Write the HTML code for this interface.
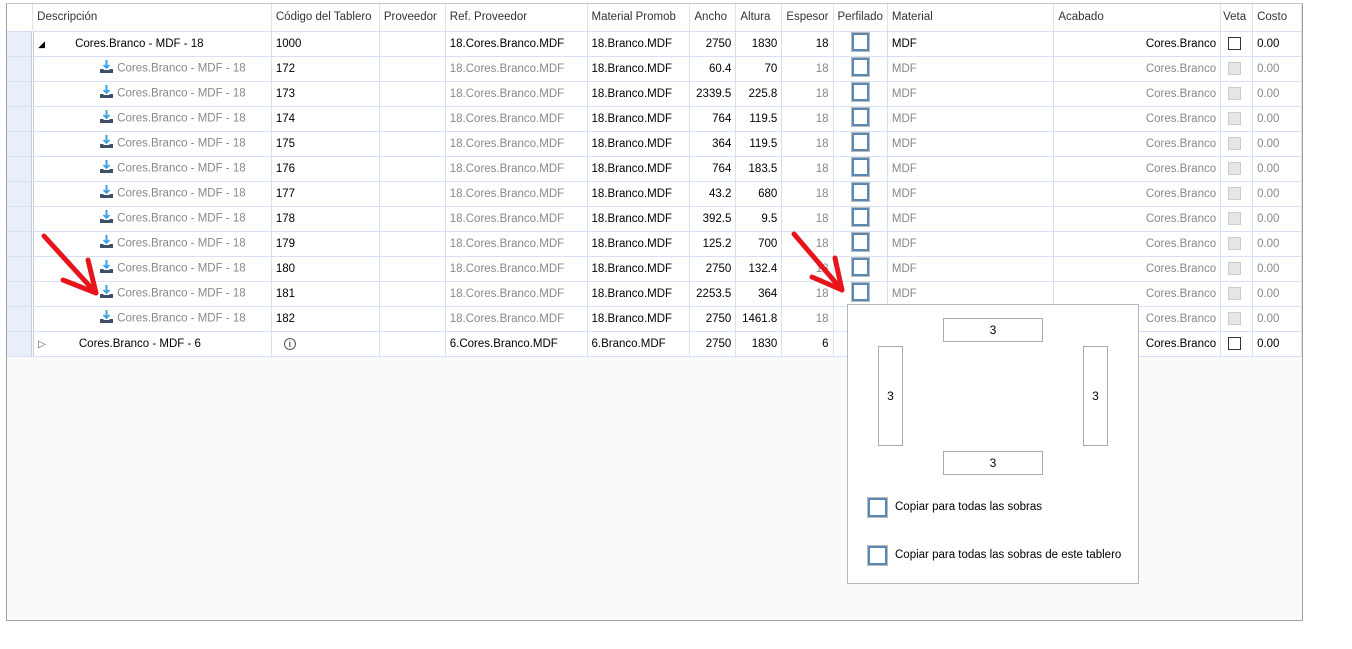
<!DOCTYPE html>
<html><head><meta charset="utf-8"><style>
*{margin:0;padding:0;box-sizing:border-box}
body{width:1352px;height:649px;background:#fff;font-family:"Liberation Sans",sans-serif;font-size:11.5px;position:relative;overflow:hidden}
#grid{position:absolute;left:6px;top:3px;width:1297px;height:618px;border:1px solid #a0a0a0;border-top:1px solid #c8c8c8;background:#fafafa}
table{border-collapse:collapse;table-layout:fixed;position:absolute;left:0;top:0}
td{height:25px;border-right:1px solid #d5e1f2;border-bottom:1px solid #d5e1f2;white-space:nowrap;overflow:hidden;padding:0 4px;color:#000;background:#fff}
tr.h td{height:27px;color:#333;background:#fff;border-right:1px solid #e3e3e3;border-bottom:1px solid #d5e1f2}
td.rh{background:#e9eef8;border-right:3px double #c6cfdc;padding:0}
tr.h td.rh{background:#fff}
tr.c td{color:#888}
tr.c td.k{color:#000}
.r{text-align:right}
.cb{display:inline-block;width:19px;height:20px;border:3px solid #5a88b4;vertical-align:middle;position:relative;top:-2px;outline:1px solid #bbb;outline-offset:-1px}
.vb{display:inline-block;width:13px;height:13px;border:1px solid #333;background:#fff;vertical-align:middle}
tr.c .vb{border-color:#ccc;background:#e6e6e6}
.ic{display:inline-block;width:13px;height:13px;vertical-align:middle;margin-right:4px;position:relative;top:-2px}
.d{padding-left:66px}
.p{padding-left:17px}
.v{padding-left:7px}
#pop{position:absolute;left:847px;top:304px;width:292px;height:280px;background:#fff;border:1px solid #b8b8b8}
.bx{position:absolute;border:1px solid #aaa;background:#fff;display:flex;align-items:center;justify-content:center;font-size:12px}
.lbl{position:absolute;font-size:11.5px}
</style></head><body>
<svg width="0" height="0" style="position:absolute"><defs><g id="i"><path d="M6.5 0v7" stroke="#3aa0e0" stroke-width="2"/><path d="M3.5 5l3 3 3-3" fill="none" stroke="#3aa0e0" stroke-width="1.6"/><path d="M0 9h3l1 1h5l1-1h3v4H0z" fill="#3d5068"/></g></defs></svg>
<div id="grid">
<table>
<colgroup><col style="width:26px"><col style="width:239px"><col style="width:108px"><col style="width:66px"><col style="width:142px"><col style="width:103px"><col style="width:46px"><col style="width:46px"><col style="width:48px"><col style="width:54px"><col style="width:168px"><col style="width:168px"><col style="width:32px"><col style="width:49px"></colgroup>
<tr class="h"><td class="rh"></td><td>Descripción</td><td>Código del Tablero</td><td>Proveedor</td><td>Ref. Proveedor</td><td>Material Promob</td><td>Ancho</td><td>Altura</td><td>Espesor</td><td>Perfilado</td><td>Material</td><td>Acabado</td><td style="padding:0 2px">Veta</td><td>Costo</td></tr>
<tr><td class="rh"></td><td><span style="font-size:9px;margin-right:30px">◢</span>Cores.Branco - MDF - 18</td><td>1000</td><td></td><td>18.Cores.Branco.MDF</td><td>18.Branco.MDF</td><td class="r">2750</td><td class="r">1830</td><td class="r">18</td><td class="p"><span class="cb"></span></td><td>MDF</td><td class="r">Cores.Branco</td><td class="v"><span class="vb"></span></td><td>0.00</td></tr>
<tr class="c"><td class="rh"></td><td class="d"><svg class="ic" viewBox="0 0 13 13"><use href="#i"/></svg>Cores.Branco - MDF - 18</td><td class="k">172</td><td></td><td>18.Cores.Branco.MDF</td><td class="k">18.Branco.MDF</td><td class="r k">60.4</td><td class="r k">70</td><td class="r">18</td><td class="p"><span class="cb"></span></td><td>MDF</td><td class="r">Cores.Branco</td><td class="v"><span class="vb"></span></td><td>0.00</td></tr>
<tr class="c"><td class="rh"></td><td class="d"><svg class="ic" viewBox="0 0 13 13"><use href="#i"/></svg>Cores.Branco - MDF - 18</td><td class="k">173</td><td></td><td>18.Cores.Branco.MDF</td><td class="k">18.Branco.MDF</td><td class="r k">2339.5</td><td class="r k">225.8</td><td class="r">18</td><td class="p"><span class="cb"></span></td><td>MDF</td><td class="r">Cores.Branco</td><td class="v"><span class="vb"></span></td><td>0.00</td></tr>
<tr class="c"><td class="rh"></td><td class="d"><svg class="ic" viewBox="0 0 13 13"><use href="#i"/></svg>Cores.Branco - MDF - 18</td><td class="k">174</td><td></td><td>18.Cores.Branco.MDF</td><td class="k">18.Branco.MDF</td><td class="r k">764</td><td class="r k">119.5</td><td class="r">18</td><td class="p"><span class="cb"></span></td><td>MDF</td><td class="r">Cores.Branco</td><td class="v"><span class="vb"></span></td><td>0.00</td></tr>
<tr class="c"><td class="rh"></td><td class="d"><svg class="ic" viewBox="0 0 13 13"><use href="#i"/></svg>Cores.Branco - MDF - 18</td><td class="k">175</td><td></td><td>18.Cores.Branco.MDF</td><td class="k">18.Branco.MDF</td><td class="r k">364</td><td class="r k">119.5</td><td class="r">18</td><td class="p"><span class="cb"></span></td><td>MDF</td><td class="r">Cores.Branco</td><td class="v"><span class="vb"></span></td><td>0.00</td></tr>
<tr class="c"><td class="rh"></td><td class="d"><svg class="ic" viewBox="0 0 13 13"><use href="#i"/></svg>Cores.Branco - MDF - 18</td><td class="k">176</td><td></td><td>18.Cores.Branco.MDF</td><td class="k">18.Branco.MDF</td><td class="r k">764</td><td class="r k">183.5</td><td class="r">18</td><td class="p"><span class="cb"></span></td><td>MDF</td><td class="r">Cores.Branco</td><td class="v"><span class="vb"></span></td><td>0.00</td></tr>
<tr class="c"><td class="rh"></td><td class="d"><svg class="ic" viewBox="0 0 13 13"><use href="#i"/></svg>Cores.Branco - MDF - 18</td><td class="k">177</td><td></td><td>18.Cores.Branco.MDF</td><td class="k">18.Branco.MDF</td><td class="r k">43.2</td><td class="r k">680</td><td class="r">18</td><td class="p"><span class="cb"></span></td><td>MDF</td><td class="r">Cores.Branco</td><td class="v"><span class="vb"></span></td><td>0.00</td></tr>
<tr class="c"><td class="rh"></td><td class="d"><svg class="ic" viewBox="0 0 13 13"><use href="#i"/></svg>Cores.Branco - MDF - 18</td><td class="k">178</td><td></td><td>18.Cores.Branco.MDF</td><td class="k">18.Branco.MDF</td><td class="r k">392.5</td><td class="r k">9.5</td><td class="r">18</td><td class="p"><span class="cb"></span></td><td>MDF</td><td class="r">Cores.Branco</td><td class="v"><span class="vb"></span></td><td>0.00</td></tr>
<tr class="c"><td class="rh"></td><td class="d"><svg class="ic" viewBox="0 0 13 13"><use href="#i"/></svg>Cores.Branco - MDF - 18</td><td class="k">179</td><td></td><td>18.Cores.Branco.MDF</td><td class="k">18.Branco.MDF</td><td class="r k">125.2</td><td class="r k">700</td><td class="r">18</td><td class="p"><span class="cb"></span></td><td>MDF</td><td class="r">Cores.Branco</td><td class="v"><span class="vb"></span></td><td>0.00</td></tr>
<tr class="c"><td class="rh"></td><td class="d"><svg class="ic" viewBox="0 0 13 13"><use href="#i"/></svg>Cores.Branco - MDF - 18</td><td class="k">180</td><td></td><td>18.Cores.Branco.MDF</td><td class="k">18.Branco.MDF</td><td class="r k">2750</td><td class="r k">132.4</td><td class="r">18</td><td class="p"><span class="cb"></span></td><td>MDF</td><td class="r">Cores.Branco</td><td class="v"><span class="vb"></span></td><td>0.00</td></tr>
<tr class="c"><td class="rh"></td><td class="d"><svg class="ic" viewBox="0 0 13 13"><use href="#i"/></svg>Cores.Branco - MDF - 18</td><td class="k">181</td><td></td><td>18.Cores.Branco.MDF</td><td class="k">18.Branco.MDF</td><td class="r k">2253.5</td><td class="r k">364</td><td class="r">18</td><td class="p"><span class="cb"></span></td><td>MDF</td><td class="r">Cores.Branco</td><td class="v"><span class="vb"></span></td><td>0.00</td></tr>
<tr class="c"><td class="rh"></td><td class="d"><svg class="ic" viewBox="0 0 13 13"><use href="#i"/></svg>Cores.Branco - MDF - 18</td><td class="k">182</td><td></td><td>18.Cores.Branco.MDF</td><td class="k">18.Branco.MDF</td><td class="r k">2750</td><td class="r k">1461.8</td><td class="r">18</td><td class="p"><span class="cb"></span></td><td>MDF</td><td class="r">Cores.Branco</td><td class="v"><span class="vb"></span></td><td>0.00</td></tr>
<tr><td class="rh"></td><td><span style="font-size:10px;margin-right:33px;color:#555">▷</span>Cores.Branco - MDF - 6</td><td><span style="display:inline-block;width:12px;height:12px;border:1px solid #555;border-radius:50%;font-size:9px;line-height:10px;text-align:center;margin-left:8px">i</span></td><td></td><td>6.Cores.Branco.MDF</td><td>6.Branco.MDF</td><td class="r">2750</td><td class="r">1830</td><td class="r">6</td><td></td><td></td><td class="r">Cores.Branco</td><td class="v"><span class="vb"></span></td><td>0.00</td></tr>
</table>
</div>
<div id="pop">
<div class="bx" style="left:95px;top:13px;width:100px;height:24px">3</div>
<div class="bx" style="left:30px;top:41px;width:25px;height:100px">3</div>
<div class="bx" style="left:235px;top:41px;width:25px;height:100px">3</div>
<div class="bx" style="left:95px;top:146px;width:100px;height:24px">3</div>
<span class="cb" style="position:absolute;left:19px;top:192px;width:21px;height:21px"></span>
<div class="lbl" style="left:47px;top:196px">Copiar para todas las sobras</div>
<span class="cb" style="position:absolute;left:19px;top:240px;width:21px;height:21px"></span>
<div class="lbl" style="left:47px;top:244px">Copiar para todas las sobras de este tablero</div>
</div>
<svg style="position:absolute;left:0;top:0" width="1352" height="649">
<g fill="none" stroke="#e8141c" stroke-width="5" stroke-linecap="round" stroke-linejoin="round">
<path d="M44 236 L96 293"/><path d="M63 280 L96 293 L88 260"/>
<path d="M794 234 L842 290"/><path d="M812 277 L842 290 L835 258"/>
</g></svg>
</body></html>
